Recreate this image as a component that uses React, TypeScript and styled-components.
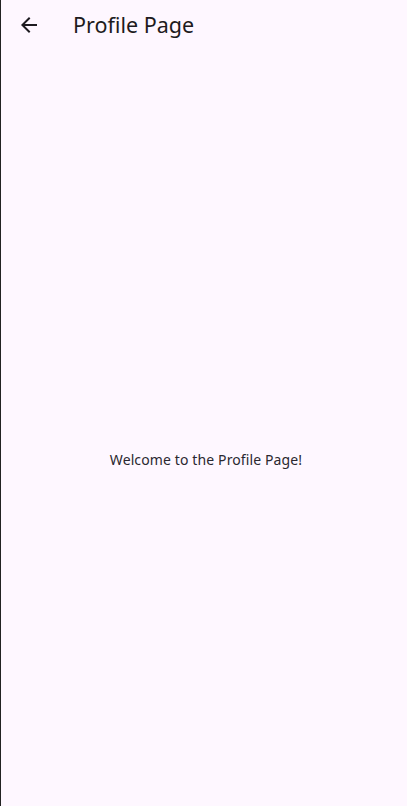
import React from "react";
import styled, { createGlobalStyle } from "styled-components";

const Global = createGlobalStyle`
  html, body { margin: 0; padding: 0; height: 100%; background: #fef7ff; }
  #root { height: 100%; }
`;

const Frame = styled.div`
  display: flex;
  height: 806px;
  width: 407px;
  overflow: hidden;
  background: #fef7ff;
`;

const Edge = styled.div`
  width: 1px;
  flex: none;
  background: #222;
`;

const Screen = styled.div`
  flex: 1;
  display: flex;
  flex-direction: column;
  font-family: "Noto Sans", "Open Sans", sans-serif;
  color: #1d1b20;
`;

const AppBar = styled.header`
  height: 49px;
  display: flex;
  align-items: center;
  flex: none;
`;

const Leading = styled.button`
  width: 56px;
  height: 49px;
  display: flex;
  align-items: center;
  justify-content: center;
  border: none;
  background: transparent;
  padding: 0;
  color: #1d1b20;
`;

const Title = styled.h1`
  margin: 0 0 0 16px;
  font-size: 21.5px;
  font-weight: 400;
  letter-spacing: 0;
  color: #1d1b20;
`;

const Body = styled.main`
  flex: 1;
  display: flex;
  align-items: center;
  justify-content: center;
  padding-top: 64px;
  padding-left: 4px;
`;

const Message = styled.p`
  margin: 0;
  font-size: 14px;
  letter-spacing: 0.12px;
  color: #2a2830;
`;

export default function App() {
  return (
    <>
      <Global />
      <Frame>
        <Edge />
        <Screen>
          <AppBar>
            <Leading aria-label="Back">
              <svg width="24" height="24" viewBox="0 0 24 24" fill="currentColor">
                <path d="M20 11H7.83l5.59-5.59L12 4l-8 8 8 8 1.41-1.41L7.83 13H20v-2z" />
              </svg>
            </Leading>
            <Title>Profile Page</Title>
          </AppBar>
          <Body>
            <Message>Welcome to the Profile Page!</Message>
          </Body>
        </Screen>
      </Frame>
    </>
  );
}
